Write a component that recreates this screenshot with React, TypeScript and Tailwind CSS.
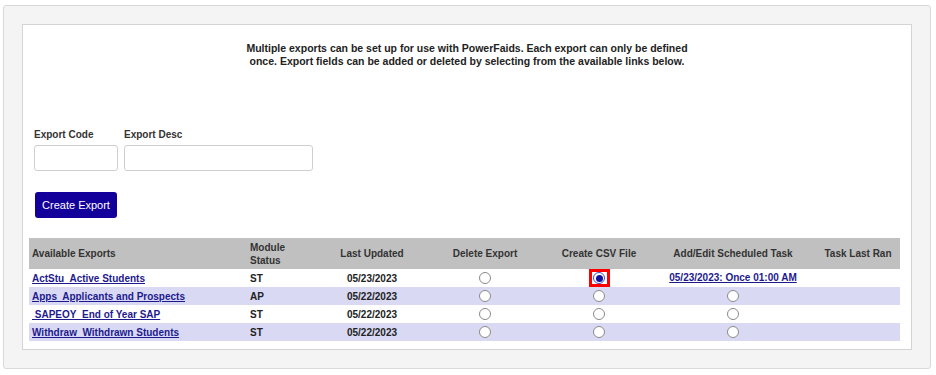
import React from 'react';

type Row = {
  name: string;
  module: string;
  updated: string;
  csvChecked?: boolean;
  task?: string;
};

const rows: Row[] = [
  { name: 'ActStu\u00a0 Active Students', module: 'ST', updated: '05/23/2023', csvChecked: true, task: '05/23/2023: Once 01:00 AM' },
  { name: 'Apps\u00a0 Applicants and Prospects', module: 'AP', updated: '05/22/2023' },
  { name: '\u00a0SAPEOY\u00a0 End of Year SAP', module: 'ST', updated: '05/22/2023' },
  { name: 'Withdraw\u00a0 Withdrawn Students', module: 'ST', updated: '05/22/2023' },
];

const Radio = ({ checked = false }: { checked?: boolean }) => (
  <span
    className={`inline-flex w-[12px] h-[12px] rounded-full border items-center justify-center align-middle bg-white ${
      checked ? 'border-[#4a4ac4]' : 'border-[#8a8a8a]'
    }`}
  >
    {checked && <span className="w-[7px] h-[7px] rounded-full bg-[#10109e]" />}
  </span>
);

const App: React.FC = () => {
  return (
    <div className="w-[936px] h-[375px] bg-white pt-[5px] pl-[3px] font-['Liberation_Sans',Arial,sans-serif] text-[#222]">
      <div className="w-[928px] h-[364px] bg-[#f4f4f4] border border-[#d9d9d9] rounded-[3px] p-[18px]">
        <div className="w-[890px] h-[326px] bg-white border border-[#d4d4d4] pt-[17px]">
          {/* intro */}
          <p className="text-center text-[10.5px] leading-[13px] font-bold text-[#222] whitespace-nowrap">
            Multiple exports can be set up for use with PowerFaids. Each export can only be defined
            <br />
            once. Export fields can be added or deleted by selecting from the available links below.
          </p>

          {/* form */}
          <div className="flex gap-[6px] pl-[11px] mt-[60px]">
            <label className="flex flex-col gap-[4px]">
              <span className="text-[10px] leading-[13px] font-bold text-[#333]">Export Code</span>
              <input className="w-[84px] h-[26px] border border-[#cfcfcf] rounded-[3px] bg-white outline-none" />
            </label>
            <label className="flex flex-col gap-[4px]">
              <span className="text-[10px] leading-[13px] font-bold text-[#333]">Export Desc</span>
              <input className="w-[189px] h-[26px] border border-[#cfcfcf] rounded-[3px] bg-white outline-none" />
            </label>
          </div>

          <button className="ml-[12px] mt-[21px] w-[82px] h-[26px] bg-[#13009b] text-white text-[11px] rounded-[3px] flex items-center justify-center">
            Create Export
          </button>

          {/* exports table */}
          <table className="ml-[6px] mt-[20px] w-[871px] table-fixed border-collapse text-[10px] font-bold">
            <colgroup>
              <col className="w-[218px]" />
              <col className="w-[75px]" />
              <col className="w-[100px]" />
              <col className="w-[126px]" />
              <col className="w-[102px]" />
              <col className="w-[166px]" />
              <col className="w-[84px]" />
            </colgroup>
            <thead>
              <tr className="bg-[#c0c0c0] text-[#333] h-[31px]">
                <th className="text-left pl-[3px] font-bold">Available Exports</th>
                <th className="text-left pl-[3px] font-bold leading-[13px]">Module<br />Status</th>
                <th className="text-center font-bold">Last Updated</th>
                <th className="text-center font-bold">Delete Export</th>
                <th className="text-center font-bold">Create CSV File</th>
                <th className="text-center font-bold">Add/Edit Scheduled Task</th>
                <th className="text-center font-bold">Task Last Ran</th>
              </tr>
            </thead>
            <tbody>
              {rows.map((r, i) => (
                <tr key={r.name} className={`h-[18px] ${i % 2 === 1 ? 'bg-[#d9d9f3]' : 'bg-white'}`}>
                  <td className="pl-[3px] whitespace-pre p-0">
                    <a href="#" className="text-[#1d1a8e] underline">{r.name}</a>
                  </td>
                  <td className="pl-[3px] p-0">{r.module}</td>
                  <td className="text-center p-0">{r.updated}</td>
                  <td className="text-center leading-none p-0"><Radio /></td>
                  <td className="text-center leading-none p-0">
                    {r.csvChecked ? (
                      <span className="inline-flex items-center justify-center w-[21px] h-[18px] -my-[2px] border-[3px] border-[#ff0000] align-middle">
                        <Radio checked />
                      </span>
                    ) : (
                      <Radio />
                    )}
                  </td>
                  <td className="text-center p-0 leading-none">
                    {r.task ? (
                      <a href="#" className="text-[#1d1a8e] underline leading-[18px]">{r.task}</a>
                    ) : (
                      <Radio />
                    )}
                  </td>
                  <td className="p-0" />
                </tr>
              ))}
            </tbody>
          </table>
        </div>
      </div>
    </div>
  );
};

export default App;
